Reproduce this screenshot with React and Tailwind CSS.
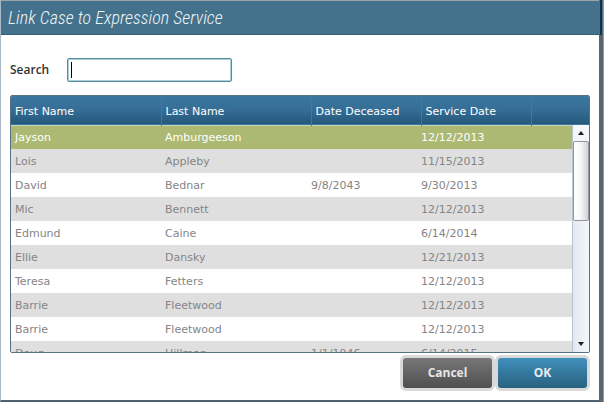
import { useState } from "react";

const people = [
  { first: "Jayson", last: "Amburgeeson", deceased: "", service: "12/12/2013" },
  { first: "Lois", last: "Appleby", deceased: "", service: "11/15/2013" },
  { first: "David", last: "Bednar", deceased: "9/8/2043", service: "9/30/2013" },
  { first: "Mic", last: "Bennett", deceased: "", service: "12/12/2013" },
  { first: "Edmund", last: "Caine", deceased: "", service: "6/14/2014" },
  { first: "Ellie", last: "Dansky", deceased: "", service: "12/21/2013" },
  { first: "Teresa", last: "Fetters", deceased: "", service: "12/12/2013" },
  { first: "Barrie", last: "Fleetwood", deceased: "", service: "12/12/2013" },
  { first: "Barrie", last: "Fleetwood", deceased: "", service: "12/12/2013" },
  { first: "Doug", last: "Hillman", deceased: "1/1/1946", service: "6/14/2015" },
];

function Arrow({ down }) {
  return (
    <svg viewBox="0 0 6 4" className="w-[6px] h-[4px] fill-[#1d1d1d]">
      {down ? <path d="M0 0h6L3 4z" /> : <path d="M0 4h6L3 0z" />}
    </svg>
  );
}

function ScrollBar() {
  return (
    <div className="absolute right-0 top-[29px] bottom-0 w-[17px] flex flex-col border-l border-[#b9c4cc] bg-linear-to-r from-[#e2e9ef] to-[#f3f7fb]">
      <button
        type="button"
        aria-label="Scroll up"
        className="h-4 flex items-center justify-center bg-[#f4f7f9]"
      >
        <Arrow />
      </button>
      <div className="h-20 rounded-xs border border-[#8e979e] bg-linear-to-r from-white via-[#f4f5f6] to-[#cfd3d6]" />
      <div className="flex-1" />
      <button
        type="button"
        aria-label="Scroll down"
        className="h-4 flex items-center justify-center"
      >
        <Arrow down />
      </button>
    </div>
  );
}

export default function App() {
  const [search, setSearch] = useState("");
  const [selected, setSelected] = useState(0);

  const getRowStyle = (index) => {
    if (index === selected) return "bg-[#abb973] text-white";
    return index % 2 ? "bg-[#dfdfdf] text-[#858585]" : "bg-white text-[#858585]";
  };

  return (
    <div className="h-screen w-full flex bg-white overflow-hidden">
      <div className="flex-1 min-w-0 flex flex-col border-l border-l-[#a9b8c5] border-b-2 border-b-[#4e6272]">
        <header className="h-[35px] shrink-0 flex items-center px-[7px] bg-[#44718c] border-t border-t-[#9aa4a8] border-b border-b-[#315f78]">
          <h1 className="font-['Roboto_Condensed','Liberation_Sans',sans-serif] font-light italic text-[18px] leading-5 text-[#eef5f8]">
            Link Case to Expression Service
          </h1>
        </header>

        <main className="flex-1 min-h-0 flex flex-col pl-[9px] pr-[9px] pt-[23px] pb-[9px]">
          <div className="flex items-center mb-[13px]">
            <label
              htmlFor="search"
              className="w-[57px] font-['Open_Sans',sans-serif] font-semibold text-[12px] leading-4 text-[#333]"
            >
              Search
            </label>
            <div className="relative">
              <input
                id="search"
                type="text"
                value={search}
                onChange={(e) => setSearch(e.target.value)}
                className="peer block w-[165px] h-6 px-1 rounded-xs border border-[#5b8c9d] inset-ring inset-ring-[#a9d0da] bg-white text-[11px] outline-none"
              />
              {!search && (
                <span className="absolute left-1 top-1 w-px h-4 bg-black peer-focus:hidden" />
              )}
            </div>
          </div>

          <div className="relative flex-1 min-h-0 overflow-hidden rounded-xs border border-[#557285]">
            <table className="w-full table-fixed border-collapse font-['DejaVu_Sans',sans-serif] text-[11px] leading-4 text-left">
              <colgroup>
                <col className="w-[150px]" />
                <col className="w-[150px]" />
                <col className="w-[110px]" />
                <col className="w-[110px]" />
                <col />
              </colgroup>
              <thead>
                <tr className="h-[29px] bg-linear-to-b from-[#3c779f] via-[#356d95] to-[#25587b] text-white border-b border-[#c8d2c0]">
                  <th className="font-normal pl-1 pt-1 border-r border-[#4078a0]">First Name</th>
                  <th className="font-normal pl-1 pt-1 border-r border-[#4078a0]">Last Name</th>
                  <th className="font-normal pl-1 pt-1 border-r border-[#4078a0]">Date Deceased</th>
                  <th className="font-normal pl-1 pt-1 border-r border-[#4078a0]">Service Date</th>
                  <th></th>
                </tr>
              </thead>
              <tbody>
                {people.map((person, index) => (
                  <tr
                    key={index}
                    onClick={() => setSelected(index)}
                    className={`h-6 ${getRowStyle(index)}`}
                  >
                    <td className="pl-1 pt-[2px]">{person.first}</td>
                    <td className="pl-1 pt-[2px]">{person.last}</td>
                    <td className="pt-[2px]">{person.deceased}</td>
                    <td className="pt-[2px]">{person.service}</td>
                    <td></td>
                  </tr>
                ))}
              </tbody>
            </table>
            <ScrollBar />
          </div>

          <div className="flex justify-end mt-[2px] font-['Open_Sans',sans-serif] font-bold text-[12px] leading-4">
            <button
              type="button"
              className="w-[95px] h-9 rounded-md border-3 border-[#d9d9d9] bg-linear-to-b from-[#777] to-[#505050] text-[#e6e6e6]"
            >
              Cancel
            </button>
            <button
              type="button"
              className="w-[95px] h-9 rounded-md border-3 border-[#d9d9d9] bg-linear-to-b from-[#4190bd] to-[#28617f] text-[#e6eef2]"
            >
              OK
            </button>
          </div>
        </main>
      </div>

      <div className="w-[5px] flex flex-col border-r border-r-[#8d9ba4]">
        <div className="h-[35px] border-x border-[#44718c] bg-[#1d3042]" />
        <div className="flex-1 bg-[#58656e]" />
      </div>
    </div>
  );
}
